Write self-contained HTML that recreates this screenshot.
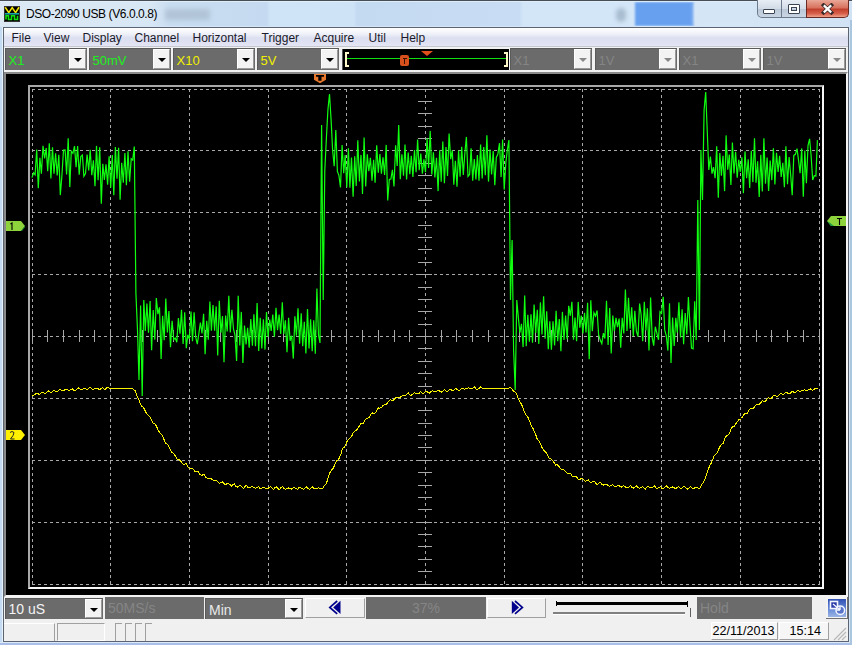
<!DOCTYPE html>
<html><head><meta charset="utf-8">
<style>
*{margin:0;padding:0;box-sizing:border-box}
html,body{width:852px;height:645px;overflow:hidden}
body{position:relative;background:#c5dbf1;font-family:"Liberation Sans",sans-serif;}
.a{position:absolute}
#title{position:absolute;left:0;top:0;width:852px;height:27px;
 background:linear-gradient(90deg,#dce9f4 0%,#d8e7f4 17.6%,#c9ddf1 20%,#c5daf0 31.3%,#d0e4f7 31.7%,#cee3f6 41.5%,#c4daf1 41.9%,#c8ddf3 61%,#d3e6f8 61.4%,#d3e6f8 72%,#d6e7f7 82%,#d0e2f3 100%);}
#ttext{position:absolute;left:26px;top:7px;font-size:12px;color:#000;white-space:nowrap;letter-spacing:-0.42px}
.wb{position:absolute;top:0;height:18px;border:1px solid #6b7a8c;border-top:none}
#menubar{position:absolute;left:4px;top:28px;width:844px;height:19px;
 background:linear-gradient(#ffffff 0%,#eef0f8 35%,#dcdff0 55%,#dfe1f2 80%,#e4e6f5 100%);border-bottom:1px solid #c4c6d0}
#menubar span{position:absolute;top:3px;font-size:12px;color:#1a1a2a}
#tb{position:absolute;left:4px;top:47px;width:844px;height:25px;background:#f2f2f2}
.cb{position:absolute;background:#6b6b6b;border-top:1px solid #5a5a5a;border-left:1px solid #5a5a5a}
.cb span{position:absolute;left:2.5px;top:3.5px;font-size:13px;white-space:nowrap}
.dd{position:absolute;right:1px;top:0px;width:17px;bottom:1px;background:#f3f3f3;
 border-top:1px solid #fff;border-left:1px solid #fff;border-right:1px solid #9a9a9a;border-bottom:1px solid #9a9a9a}
.dd i{position:absolute;left:3.5px;top:8px;width:0;height:0;border-left:4px solid transparent;border-right:4px solid transparent;border-top:4px solid #000}
#scope{position:absolute;left:4px;top:72px;width:844px;height:525px;background:#000;
 border-top:2px solid #8a8a8a;border-left:2px solid #8a8a8a;border-right:2px solid #f4f4f4;border-bottom:2px solid #f4f4f4}
#grat{position:absolute;left:28px;top:85px;width:796px;height:504px;
 border-top:2px solid #a8a8a8;border-left:2px solid #a8a8a8;border-right:2px solid #f8f8f8;border-bottom:2px solid #f8f8f8}
#bt{position:absolute;left:4px;top:597px;width:844px;height:23px;background:#f0f0f0}
.box{position:absolute;background:#6b6b6b}
.box span{position:absolute;font-size:13px;white-space:nowrap;color:#858585}
.btn{position:absolute;background:#f0f0f0;border-top:1px solid #fff;border-left:1px solid #fff;border-right:1px solid #a0a0a0;border-bottom:1px solid #a0a0a0}
#status{position:absolute;left:4px;top:620px;width:844px;height:21px;background:#f0f0f0}
.pn{position:absolute;top:623px;height:18px;border-top:1px solid #a0a0a0;border-left:1px solid #a0a0a0;border-right:1px solid #fff;border-bottom:1px solid #fff}
.pn span{position:absolute;top:2px;font-size:12px;color:#000;white-space:nowrap}
</style></head><body>
<div id="title"></div>
<!-- glass blobs -->
<div class="a" style="left:635px;top:2px;width:59px;height:24px;background:#68a0f0;filter:blur(1px)"></div><div class="a" style="left:694px;top:2px;width:60px;height:24px;background:#d4e5f6;filter:blur(2px)"></div>
<div class="a" style="left:616px;top:8px;width:10px;height:14px;border-radius:5px;background:#a8bccf;filter:blur(2px)"></div>
<div class="a" style="left:165px;top:9px;width:45px;height:11px;background:#a9bccf;filter:blur(2.5px);opacity:.75"></div>
<div class="a" style="left:0;top:0;width:852px;height:1px;background:#484e56"></div><div class="a" style="left:0;top:1px;width:852px;height:1px;background:#e4f0fa;opacity:.8"></div><div class="a" style="left:0;top:26px;width:852px;height:1px;background:#d4e6f8"></div>
<!-- icon -->
<div class="a" style="left:4px;top:6px;width:16px;height:16px;background:#000;border:1px solid #333"></div>
<svg class="a" style="left:4px;top:6px" width="16" height="16" viewBox="0 0 16 16">
<polyline points="1.2,1.2 4.8,6.6 8.2,1.6 11.6,6.6 15,1.2" fill="none" stroke="#f2e400" stroke-width="1.6"/>
<rect x="1" y="7" width="14" height="1.6" fill="#18a8a8"/>
<polyline points="2,13.5 2,9.8 4.5,9.8 4.5,13.5 7.5,13.5 7.5,9.8 10.5,9.8 10.5,13.5 13.5,13.5 13.5,9.8" fill="none" stroke="#10e010" stroke-width="1.6"/>
</svg>
<div id="ttext">DSO-2090 USB (V6.0.0.8)</div>
<!-- window buttons -->
<div class="wb" style="left:757px;width:25px;border-radius:0 0 0 5px;background:linear-gradient(#e8eef5,#d2dbe6 50%,#b9c6d6 51%,#c9d5e2)"></div>
<div class="wb" style="left:781px;width:26px;background:linear-gradient(#e8eef5,#d2dbe6 50%,#b9c6d6 51%,#c9d5e2)"></div>
<div class="wb" style="left:806px;width:43px;border-radius:0 0 5px 0;border-color:#6a2a24;background:linear-gradient(#e9a797,#d8735f 45%,#c0402e 55%,#d8604a 80%,#eea08a)"></div>
<div class="a" style="left:763px;top:9px;width:12px;height:5px;background:#fff;border:1px solid #3a4452;border-radius:1px"></div>
<div class="a" style="left:788px;top:4px;width:12px;height:10px;background:transparent;border:1px solid #3a4452;border-radius:1px"></div>
<div class="a" style="left:789px;top:5px;width:10px;height:8px;border:2px solid #fff;"></div>
<div class="a" style="left:791px;top:7px;width:6px;height:4px;border:1px solid #3a4452;"></div>
<svg class="a" style="left:820px;top:3px" width="15" height="12" viewBox="0 0 15 12"><path d="M3.6,2.2 L11.4,9.6 M11.4,2.2 L3.6,9.6" stroke="#3a2a2a" stroke-width="3.8" stroke-linecap="square"/><path d="M3.8,2.4 L11.2,9.4 M11.2,2.4 L3.8,9.4" stroke="#fff" stroke-width="2.2"/></svg>
<!-- client frame -->
<div class="a" style="left:0;top:642px;width:852px;height:1px;background:#dae8f8"></div>
<div class="a" style="left:0;top:643px;width:852px;height:2px;background:#a9bee8"></div>
<div class="a" style="left:2px;top:27px;width:1px;height:615px;background:#e6f2fc"></div>
<div class="a" style="left:850px;top:20px;width:2px;height:625px;background:#aac6de"></div>
<div class="a" style="left:849px;top:27px;width:1px;height:615px;background:#d6e8f6"></div>
<div class="a" style="left:3px;top:27px;width:846px;height:615px;border:1px solid #5b6470;background:#f0f0f0"></div>
<div id="menubar">
<span style="left:7.5px">File</span><span style="left:39.5px">View</span><span style="left:78.5px">Display</span>
<span style="left:130.5px">Channel</span><span style="left:188.5px">Horizontal</span><span style="left:257.5px">Trigger</span>
<span style="left:309.5px">Acquire</span><span style="left:364.5px">Util</span><span style="left:396.5px">Help</span>
</div>
<div id="tb"></div>
<div class="cb" style="left:5px;top:48px;width:82px;height:22px"><span style="color:#1cf01c">X1</span><div class="dd"><i style="border-top-color:#000"></i></div></div><div class="cb" style="left:89px;top:48px;width:82px;height:22px"><span style="color:#1cf01c">50mV</span><div class="dd"><i style="border-top-color:#000"></i></div></div><div class="cb" style="left:173px;top:48px;width:82px;height:22px"><span style="color:#f0f000">X10</span><div class="dd"><i style="border-top-color:#000"></i></div></div><div class="cb" style="left:257px;top:48px;width:82px;height:22px"><span style="color:#f0f000">5V</span><div class="dd"><i style="border-top-color:#000"></i></div></div><div class="cb" style="left:510px;top:48px;width:82px;height:22px"><span style="color:#858585">X1</span><div class="dd"><i style="border-top-color:#888"></i></div></div><div class="cb" style="left:595px;top:48px;width:82px;height:22px"><span style="color:#858585">1V</span><div class="dd"><i style="border-top-color:#888"></i></div></div><div class="cb" style="left:679px;top:48px;width:82px;height:22px"><span style="color:#858585">X1</span><div class="dd"><i style="border-top-color:#888"></i></div></div><div class="cb" style="left:763px;top:48px;width:83px;height:22px"><span style="color:#858585">1V</span><div class="dd"><i style="border-top-color:#888"></i></div></div>
<!-- trigger bar -->
<div class="a" style="left:342px;top:49px;width:167px;height:21px;background:#000;border-left:1px solid #555"></div>
<div class="a" style="left:345px;top:52px;width:4px;height:15px;border:2px solid #fff8c8;border-right:none"></div>
<div class="a" style="left:504px;top:52px;width:4px;height:15px;border:2px solid #fff8c8;border-left:none"></div>
<div class="a" style="left:347px;top:58px;width:159px;height:1px;background:#10e010"></div>
<div class="a" style="left:400px;top:55px;width:9px;height:11px;background:#d8501c;border-radius:2px"></div>
<div class="a" style="left:403px;top:58px;width:4px;height:1px;background:#3a1000"></div>
<div class="a" style="left:404px;top:58px;width:1px;height:6px;background:#3a1000"></div>
<svg class="a" style="left:420px;top:50px" width="14" height="7"><path d="M1,1 L13,1 L7,6 Z" fill="#e0501c"/></svg>
<!-- scope -->
<div id="scope"></div>
<div id="grat"></div>
<svg class="a" style="left:0;top:0" width="852" height="645" viewBox="0 0 852 645">
<g stroke="#a8a8a8" stroke-width="1" stroke-dasharray="3 3" shape-rendering="crispEdges">
<line x1="32.5" y1="89" x2="32.5" y2="585" />
<line x1="110.5" y1="89" x2="110.5" y2="585" />
<line x1="189.5" y1="89" x2="189.5" y2="585" />
<line x1="268.5" y1="89" x2="268.5" y2="585" />
<line x1="346.5" y1="89" x2="346.5" y2="585" />
<line x1="425.5" y1="89" x2="425.5" y2="585" />
<line x1="504.5" y1="89" x2="504.5" y2="585" />
<line x1="582.5" y1="89" x2="582.5" y2="585" />
<line x1="661.5" y1="89" x2="661.5" y2="585" />
<line x1="740.5" y1="89" x2="740.5" y2="585" />
<line x1="819.5" y1="89" x2="819.5" y2="585" />
<line x1="32" y1="89.5" x2="820" y2="89.5" />
<line x1="32" y1="150.5" x2="820" y2="150.5" />
<line x1="32" y1="212.5" x2="820" y2="212.5" />
<line x1="32" y1="274.5" x2="820" y2="274.5" />
<line x1="32" y1="336.5" x2="820" y2="336.5" />
<line x1="32" y1="398.5" x2="820" y2="398.5" />
<line x1="32" y1="460.5" x2="820" y2="460.5" />
<line x1="32" y1="522.5" x2="820" y2="522.5" />
<line x1="32" y1="584.5" x2="820" y2="584.5" />
</g>
<g stroke="#a8a8a8" stroke-width="1" shape-rendering="crispEdges">
<line x1="418" y1="89.5" x2="432" y2="89.5" />
<line x1="418" y1="101.5" x2="432" y2="101.5" />
<line x1="418" y1="113.5" x2="432" y2="113.5" />
<line x1="418" y1="126.5" x2="432" y2="126.5" />
<line x1="418" y1="138.5" x2="432" y2="138.5" />
<line x1="418" y1="150.5" x2="432" y2="150.5" />
<line x1="418" y1="163.5" x2="432" y2="163.5" />
<line x1="418" y1="175.5" x2="432" y2="175.5" />
<line x1="418" y1="188.5" x2="432" y2="188.5" />
<line x1="418" y1="200.5" x2="432" y2="200.5" />
<line x1="418" y1="212.5" x2="432" y2="212.5" />
<line x1="418" y1="225.5" x2="432" y2="225.5" />
<line x1="418" y1="237.5" x2="432" y2="237.5" />
<line x1="418" y1="249.5" x2="432" y2="249.5" />
<line x1="418" y1="262.5" x2="432" y2="262.5" />
<line x1="418" y1="274.5" x2="432" y2="274.5" />
<line x1="418" y1="287.5" x2="432" y2="287.5" />
<line x1="418" y1="299.5" x2="432" y2="299.5" />
<line x1="418" y1="311.5" x2="432" y2="311.5" />
<line x1="418" y1="324.5" x2="432" y2="324.5" />
<line x1="418" y1="336.5" x2="432" y2="336.5" />
<line x1="418" y1="348.5" x2="432" y2="348.5" />
<line x1="418" y1="361.5" x2="432" y2="361.5" />
<line x1="418" y1="373.5" x2="432" y2="373.5" />
<line x1="418" y1="386.5" x2="432" y2="386.5" />
<line x1="418" y1="398.5" x2="432" y2="398.5" />
<line x1="418" y1="410.5" x2="432" y2="410.5" />
<line x1="418" y1="423.5" x2="432" y2="423.5" />
<line x1="418" y1="435.5" x2="432" y2="435.5" />
<line x1="418" y1="447.5" x2="432" y2="447.5" />
<line x1="418" y1="460.5" x2="432" y2="460.5" />
<line x1="418" y1="472.5" x2="432" y2="472.5" />
<line x1="418" y1="485.5" x2="432" y2="485.5" />
<line x1="418" y1="497.5" x2="432" y2="497.5" />
<line x1="418" y1="509.5" x2="432" y2="509.5" />
<line x1="418" y1="522.5" x2="432" y2="522.5" />
<line x1="418" y1="534.5" x2="432" y2="534.5" />
<line x1="418" y1="546.5" x2="432" y2="546.5" />
<line x1="418" y1="559.5" x2="432" y2="559.5" />
<line x1="418" y1="571.5" x2="432" y2="571.5" />
<line x1="418" y1="584.5" x2="432" y2="584.5" />
<line x1="32.5" y1="330" x2="32.5" y2="342" />
<line x1="47.5" y1="330" x2="47.5" y2="342" />
<line x1="63.5" y1="330" x2="63.5" y2="342" />
<line x1="79.5" y1="330" x2="79.5" y2="342" />
<line x1="94.5" y1="330" x2="94.5" y2="342" />
<line x1="110.5" y1="330" x2="110.5" y2="342" />
<line x1="126.5" y1="330" x2="126.5" y2="342" />
<line x1="142.5" y1="330" x2="142.5" y2="342" />
<line x1="157.5" y1="330" x2="157.5" y2="342" />
<line x1="173.5" y1="330" x2="173.5" y2="342" />
<line x1="189.5" y1="330" x2="189.5" y2="342" />
<line x1="205.5" y1="330" x2="205.5" y2="342" />
<line x1="220.5" y1="330" x2="220.5" y2="342" />
<line x1="236.5" y1="330" x2="236.5" y2="342" />
<line x1="252.5" y1="330" x2="252.5" y2="342" />
<line x1="268.5" y1="330" x2="268.5" y2="342" />
<line x1="283.5" y1="330" x2="283.5" y2="342" />
<line x1="299.5" y1="330" x2="299.5" y2="342" />
<line x1="315.5" y1="330" x2="315.5" y2="342" />
<line x1="331.5" y1="330" x2="331.5" y2="342" />
<line x1="346.5" y1="330" x2="346.5" y2="342" />
<line x1="362.5" y1="330" x2="362.5" y2="342" />
<line x1="378.5" y1="330" x2="378.5" y2="342" />
<line x1="394.5" y1="330" x2="394.5" y2="342" />
<line x1="409.5" y1="330" x2="409.5" y2="342" />
<line x1="425.5" y1="330" x2="425.5" y2="342" />
<line x1="441.5" y1="330" x2="441.5" y2="342" />
<line x1="456.5" y1="330" x2="456.5" y2="342" />
<line x1="472.5" y1="330" x2="472.5" y2="342" />
<line x1="488.5" y1="330" x2="488.5" y2="342" />
<line x1="504.5" y1="330" x2="504.5" y2="342" />
<line x1="519.5" y1="330" x2="519.5" y2="342" />
<line x1="535.5" y1="330" x2="535.5" y2="342" />
<line x1="551.5" y1="330" x2="551.5" y2="342" />
<line x1="567.5" y1="330" x2="567.5" y2="342" />
<line x1="582.5" y1="330" x2="582.5" y2="342" />
<line x1="598.5" y1="330" x2="598.5" y2="342" />
<line x1="614.5" y1="330" x2="614.5" y2="342" />
<line x1="630.5" y1="330" x2="630.5" y2="342" />
<line x1="645.5" y1="330" x2="645.5" y2="342" />
<line x1="661.5" y1="330" x2="661.5" y2="342" />
<line x1="677.5" y1="330" x2="677.5" y2="342" />
<line x1="693.5" y1="330" x2="693.5" y2="342" />
<line x1="708.5" y1="330" x2="708.5" y2="342" />
<line x1="724.5" y1="330" x2="724.5" y2="342" />
<line x1="740.5" y1="330" x2="740.5" y2="342" />
<line x1="756.5" y1="330" x2="756.5" y2="342" />
<line x1="771.5" y1="330" x2="771.5" y2="342" />
<line x1="787.5" y1="330" x2="787.5" y2="342" />
<line x1="803.5" y1="330" x2="803.5" y2="342" />
<line x1="819.5" y1="330" x2="819.5" y2="342" />
</g>
<polyline fill="none" stroke="#f8f400" stroke-width="1" shape-rendering="crispEdges" points="32.0,395.8 33.5,395.8 35.0,394.3 36.5,393.4 38.0,393.8 39.5,394.5 41.0,392.9 42.5,392.1 44.0,392.9 45.5,393.4 47.0,392.1 48.5,391.0 50.0,392.0 51.5,392.8 53.0,391.1 54.5,390.4 56.0,391.6 57.5,391.3 59.0,389.9 60.5,389.8 62.0,390.4 63.5,390.9 65.0,389.6 66.5,389.1 68.0,390.1 69.5,390.9 71.0,389.1 72.5,388.9 74.0,390.3 75.5,390.5 77.0,389.2 78.5,388.0 80.0,389.2 81.5,389.8 83.0,388.8 84.5,388.7 86.0,389.0 87.5,389.9 89.0,388.1 90.5,387.7 92.0,389.1 93.5,389.8 95.0,388.3 96.5,388.2 98.0,388.7 99.5,389.8 101.0,388.5 102.5,387.7 104.0,389.1 105.5,389.2 107.0,387.7 108.5,387.5 110.0,388.7 111.5,388.5 113.0,388.5 114.5,388.5 116.0,388.5 117.5,388.5 119.0,388.5 120.5,388.5 122.0,388.5 123.5,388.5 125.0,388.5 126.5,388.5 128.0,388.5 129.5,388.5 131.0,388.5 132.5,388.5 134.0,389.9 135.5,391.1 137.0,396.1 138.5,398.5 140.0,402.8 141.5,406.1 143.0,406.8 144.5,409.3 146.0,412.6 147.5,414.5 149.0,416.0 150.5,417.6 152.0,420.9 153.5,423.8 155.0,424.0 156.5,426.2 158.0,430.0 159.5,432.4 161.0,434.3 162.5,435.5 164.0,439.4 165.5,443.0 167.0,443.7 168.5,446.0 170.0,449.1 171.5,452.3 173.0,452.7 174.5,454.7 176.0,457.1 177.5,459.8 179.0,459.7 180.5,460.6 182.0,463.1 183.5,464.7 185.0,463.9 186.5,464.0 188.0,467.2 189.5,468.2 191.0,468.0 192.5,468.8 194.0,470.2 195.5,471.9 197.0,471.6 198.5,471.8 200.0,474.5 201.5,475.5 203.0,474.8 204.5,475.0 206.0,477.7 207.5,478.3 209.0,478.1 210.5,478.2 212.0,479.3 213.5,480.5 215.0,480.1 216.5,480.3 218.0,482.2 219.5,483.1 221.0,482.4 222.5,481.9 224.0,483.6 225.5,484.8 227.0,483.4 228.5,483.8 230.0,484.5 231.5,486.0 233.0,484.7 234.5,483.9 236.0,486.5 237.5,487.0 239.0,485.9 240.5,485.3 242.0,487.0 243.5,488.4 245.0,486.4 246.5,485.2 248.0,487.5 249.5,487.9 251.0,487.1 252.5,486.6 254.0,487.7 255.5,488.2 257.0,487.6 258.5,486.4 260.0,488.9 261.5,488.5 263.0,487.1 264.5,487.3 266.0,488.6 267.5,488.5 269.0,487.8 270.5,486.5 272.0,488.2 273.5,489.3 275.0,487.6 276.5,486.8 278.0,488.8 279.5,489.4 281.0,487.7 282.5,486.7 284.0,488.5 285.5,489.2 287.0,488.1 288.5,488.0 290.0,488.6 291.5,489.0 293.0,487.8 294.5,487.8 296.0,488.4 297.5,489.6 299.0,486.9 300.5,487.7 302.0,488.5 303.5,489.3 305.0,488.1 306.5,487.0 308.0,488.7 309.5,489.3 311.0,488.1 312.5,487.1 314.0,488.4 315.5,488.5 317.0,488.8 318.5,487.4 320.0,488.7 321.5,488.6 323.0,488.1 324.5,485.3 326.0,484.0 327.5,480.2 329.0,474.7 330.5,471.5 332.0,469.5 333.5,467.8 335.0,464.0 336.5,460.9 338.0,460.0 339.5,457.6 341.0,453.7 342.5,448.4 344.0,447.5 345.5,445.0 347.0,441.5 348.5,439.1 350.0,438.3 351.5,436.6 353.0,433.2 354.5,431.3 356.0,430.8 357.5,428.8 359.0,426.4 360.5,423.9 362.0,423.7 363.5,423.1 365.0,420.2 366.5,418.4 368.0,417.9 369.5,417.2 371.0,414.3 372.5,413.0 374.0,413.2 375.5,412.8 377.0,410.2 378.5,407.9 380.0,408.2 381.5,407.4 383.0,405.4 384.5,404.5 386.0,404.4 387.5,402.8 389.0,400.9 390.5,399.5 392.0,400.6 393.5,400.1 395.0,398.2 396.5,397.7 398.0,397.6 399.5,397.6 401.0,396.8 402.5,395.4 404.0,396.0 405.5,395.6 407.0,394.2 408.5,393.1 410.0,395.0 411.5,395.1 413.0,393.9 414.5,392.9 416.0,393.7 417.5,393.9 419.0,393.4 420.5,391.4 422.0,393.2 423.5,393.4 425.0,392.2 426.5,391.2 428.0,392.7 429.5,393.1 431.0,391.3 432.5,390.6 434.0,391.9 435.5,391.9 437.0,390.8 438.5,390.2 440.0,391.5 441.5,392.2 443.0,390.8 444.5,389.6 446.0,391.1 447.5,391.3 449.0,390.0 450.5,389.2 452.0,390.4 453.5,390.4 455.0,388.9 456.5,388.9 458.0,390.2 459.5,390.3 461.0,388.8 462.5,388.1 464.0,389.1 465.5,388.9 467.0,388.4 468.5,387.7 470.0,388.6 471.5,388.8 473.0,388.2 474.5,386.6 476.0,389.1 477.5,389.1 479.0,388.4 480.5,386.9 482.0,388.0 483.5,388.0 485.0,388.0 486.5,388.0 488.0,388.0 489.5,388.0 491.0,388.0 492.5,388.0 494.0,388.0 495.5,388.0 497.0,388.0 498.5,388.0 500.0,388.0 501.5,388.0 503.0,388.0 504.5,388.0 506.0,388.0 507.5,388.0 509.0,388.0 510.5,387.2 512.0,389.0 513.5,391.1 515.0,391.7 516.5,393.6 518.0,398.4 519.5,401.3 521.0,403.4 522.5,406.6 524.0,410.7 525.5,414.2 527.0,416.0 528.5,418.2 530.0,422.3 531.5,426.4 533.0,428.4 534.5,431.9 536.0,435.5 537.5,439.8 539.0,440.9 540.5,443.5 542.0,447.4 543.5,450.3 545.0,451.3 546.5,453.3 548.0,455.7 549.5,458.7 551.0,459.1 552.5,460.3 554.0,462.6 555.5,465.1 557.0,464.7 558.5,465.6 560.0,467.9 561.5,469.7 563.0,469.7 564.5,470.3 566.0,472.1 567.5,473.9 569.0,473.7 570.5,473.3 572.0,476.3 573.5,476.5 575.0,476.6 576.5,476.9 578.0,479.1 579.5,479.7 581.0,478.6 582.5,478.5 584.0,480.0 585.5,481.5 587.0,480.3 588.5,480.0 590.0,482.1 591.5,482.4 593.0,481.6 594.5,481.5 596.0,483.8 597.5,484.5 599.0,482.9 600.5,482.3 602.0,484.5 603.5,485.1 605.0,484.2 606.5,484.1 608.0,485.3 609.5,486.4 611.0,485.3 612.5,484.8 614.0,486.1 615.5,486.7 617.0,486.0 618.5,485.1 620.0,486.8 621.5,487.2 623.0,485.8 624.5,486.1 626.0,487.3 627.5,487.8 629.0,486.8 630.5,485.6 632.0,487.5 633.5,488.0 635.0,487.0 636.5,485.9 638.0,487.9 639.5,488.1 641.0,487.3 642.5,486.8 644.0,487.9 645.5,488.9 647.0,486.9 648.5,486.4 650.0,487.7 651.5,488.0 653.0,487.0 654.5,485.9 656.0,487.9 657.5,488.5 659.0,487.4 660.5,486.6 662.0,488.5 663.5,488.2 665.0,487.1 666.5,486.1 668.0,487.8 669.5,488.2 671.0,487.7 672.5,487.0 674.0,487.7 675.5,488.8 677.0,487.4 678.5,486.8 680.0,488.2 681.5,488.5 683.0,487.1 684.5,486.3 686.0,488.2 687.5,489.1 689.0,487.8 690.5,486.8 692.0,488.0 693.5,488.6 695.0,487.7 696.5,487.1 698.0,488.0 699.5,488.7 701.0,486.0 702.5,483.5 704.0,481.4 705.5,477.8 707.0,472.9 708.5,468.6 710.0,465.4 711.5,462.6 713.0,458.8 714.5,455.2 716.0,453.9 717.5,452.7 719.0,448.5 720.5,445.7 722.0,444.0 723.5,442.9 725.0,438.1 726.5,435.7 728.0,435.0 729.5,433.4 731.0,429.1 732.5,426.7 734.0,426.5 735.5,424.4 737.0,422.2 738.5,420.0 740.0,419.4 741.5,418.5 743.0,415.8 744.5,413.7 746.0,413.7 747.5,413.2 749.0,410.0 750.5,408.7 752.0,408.7 753.5,408.6 755.0,405.7 756.5,404.6 758.0,404.8 759.5,404.2 761.0,402.5 762.5,400.6 764.0,401.6 765.5,401.0 767.0,399.1 768.5,397.5 770.0,398.5 771.5,398.2 773.0,395.9 774.5,395.3 776.0,396.1 777.5,396.2 779.0,395.0 780.5,393.5 782.0,394.1 783.5,394.2 785.0,393.0 786.5,392.2 788.0,393.4 789.5,393.7 791.0,392.5 792.5,391.3 794.0,392.4 795.5,392.2 797.0,391.1 798.5,390.7 800.0,391.8 801.5,390.9 803.0,390.3 804.5,389.9 806.0,390.8 807.5,390.3 809.0,389.2 810.5,389.0 812.0,390.1 813.5,390.0 815.0,388.5 816.5,388.6 818.0,389.1"/>
<polyline fill="none" stroke="#10ff10" stroke-width="1.2" points="32.0,177.6 33.6,172.8 35.1,174.8 36.7,149.6 38.3,188.2 39.9,157.8 41.4,173.6 43.0,145.9 44.6,158.5 46.2,148.0 47.7,171.2 49.3,143.3 50.9,178.5 52.5,147.3 54.0,173.7 55.6,153.3 57.2,175.5 58.8,154.8 60.3,195.1 61.9,175.8 63.5,150.1 65.1,150.0 66.6,174.4 68.2,138.2 69.8,187.1 71.3,151.2 72.9,153.3 74.5,146.1 76.1,167.2 77.6,146.0 79.2,174.8 80.8,156.6 82.4,155.1 83.9,176.3 85.5,173.6 87.1,154.5 88.7,170.5 90.2,149.7 91.8,175.3 93.4,160.3 95.0,186.2 96.5,145.9 98.1,180.3 99.7,147.2 101.3,203.8 102.8,163.8 104.4,179.9 106.0,164.4 107.6,184.8 109.1,156.4 110.7,187.8 112.3,155.0 113.8,195.2 115.4,147.0 117.0,178.8 118.6,147.8 120.1,199.8 121.7,162.9 123.3,182.7 124.9,153.1 126.4,185.1 128.0,151.4 129.6,181.7 131.2,158.8 132.7,160.0 134.3,146.6 135.9,293.0 137.5,330.0 139.0,380.0 140.6,305.6 142.2,396.0 143.8,300.0 145.3,330.9 146.9,303.6 148.5,332.6 150.1,301.0 151.6,350.3 153.2,310.1 154.8,339.8 156.3,298.1 157.9,314.1 159.5,307.3 161.1,359.1 162.6,315.8 164.2,340.2 165.8,298.6 167.4,332.5 168.9,311.1 170.5,347.1 172.1,320.8 173.7,339.5 175.2,338.1 176.8,342.3 178.4,318.1 180.0,333.7 181.5,309.7 183.1,344.0 184.7,312.4 186.3,348.3 187.8,334.7 189.4,339.0 191.0,311.5 192.5,341.1 194.1,312.4 195.7,337.1 197.3,344.1 198.8,334.0 200.4,322.6 202.0,333.4 203.6,313.8 205.1,354.3 206.7,320.7 208.3,339.7 209.9,301.5 211.4,330.7 213.0,305.1 214.6,330.8 216.2,306.4 217.7,355.6 219.3,300.7 220.9,332.8 222.5,316.1 224.0,362.3 225.6,315.6 227.2,331.4 228.8,295.8 230.3,332.5 231.9,309.9 233.5,329.2 235.0,335.1 236.6,361.0 238.2,295.7 239.8,345.4 241.3,311.9 242.9,363.0 244.5,325.6 246.1,344.5 247.6,327.8 249.2,347.6 250.8,319.1 252.4,345.6 253.9,314.3 255.5,346.3 257.1,302.9 258.7,350.9 260.2,317.8 261.8,348.4 263.4,319.2 265.0,349.6 266.5,312.1 268.1,336.8 269.7,319.6 271.2,330.9 272.8,314.5 274.4,336.7 276.0,307.7 277.5,330.1 279.1,314.6 280.7,333.9 282.3,302.4 283.8,334.0 285.4,320.3 287.0,352.2 288.6,317.8 290.1,340.7 291.7,335.8 293.3,358.6 294.9,316.2 296.4,335.7 298.0,308.2 299.6,343.7 301.2,313.4 302.7,346.2 304.3,321.7 305.9,353.5 307.5,308.9 309.0,348.6 310.6,319.4 312.2,351.2 313.7,320.4 315.3,353.7 316.9,288.5 318.5,335.3 320.0,343.0 321.6,125.0 323.2,300.0 324.8,170.0 326.3,140.0 327.9,110.0 329.5,94.0 331.1,120.0 332.6,150.0 334.2,166.2 335.8,130.0 337.4,171.5 338.9,175.4 340.5,187.5 342.1,145.1 343.7,173.3 345.2,155.0 346.8,187.4 348.4,148.3 349.9,187.7 351.5,157.5 353.1,196.8 354.7,156.3 356.2,185.9 357.8,140.2 359.4,181.5 361.0,154.9 362.5,194.1 364.1,137.4 365.7,186.5 367.3,154.3 368.8,171.2 370.4,157.9 372.0,180.8 373.6,159.8 375.1,182.6 376.7,145.2 378.3,172.8 379.9,154.1 381.4,173.8 383.0,157.2 384.6,175.0 386.2,144.9 387.7,200.5 389.3,179.5 390.9,179.1 392.4,169.8 394.0,186.4 395.6,145.2 397.2,166.0 398.7,125.0 400.3,179.3 401.9,154.2 403.5,175.8 405.0,144.5 406.6,179.5 408.2,152.5 409.8,174.2 411.3,155.7 412.9,176.9 414.5,150.1 416.1,172.2 417.6,139.5 419.2,170.1 420.8,153.6 422.4,173.7 423.9,159.4 425.5,172.1 427.1,138.3 428.6,167.9 430.2,130.9 431.8,174.6 433.4,152.2 434.9,177.5 436.5,157.9 438.1,191.1 439.7,150.2 441.2,181.8 442.8,141.6 444.4,183.2 446.0,147.1 447.5,176.0 449.1,133.5 450.7,159.1 452.3,150.3 453.8,184.7 455.4,160.8 457.0,186.6 458.6,150.6 460.1,176.8 461.7,146.9 463.3,174.9 464.9,152.5 466.4,136.9 468.0,176.4 469.6,174.4 471.1,148.3 472.7,180.6 474.3,159.0 475.9,179.5 477.4,155.1 479.0,180.8 480.6,144.6 482.2,178.5 483.7,147.1 485.3,175.3 486.9,135.2 488.5,181.6 490.0,149.5 491.6,174.4 493.2,151.0 494.8,185.1 496.3,157.4 497.9,153.9 499.5,143.2 501.1,177.1 502.6,139.6 504.2,189.6 505.8,163.2 507.3,150.0 508.9,140.0 510.5,300.0 512.1,240.0 513.6,350.0 515.2,390.0 516.8,300.0 518.4,318.1 519.9,332.7 521.5,323.8 523.1,347.1 524.7,295.5 526.2,346.2 527.8,314.8 529.4,341.6 531.0,314.2 532.5,342.6 534.1,304.5 535.7,332.9 537.3,309.9 538.8,343.9 540.4,302.4 542.0,334.4 543.6,296.2 545.1,338.7 546.7,311.3 548.3,349.1 549.8,321.3 551.4,349.6 553.0,321.2 554.6,345.4 556.1,310.8 557.7,341.1 559.3,319.1 560.9,351.3 562.4,311.9 564.0,340.0 565.6,315.5 567.2,339.2 568.7,305.8 570.3,315.8 571.9,301.7 573.5,339.8 575.0,317.5 576.6,341.3 578.2,301.9 579.8,327.7 581.3,315.5 582.9,333.5 584.5,312.7 586.0,332.5 587.6,302.7 589.2,359.2 590.8,300.3 592.3,331.2 593.9,312.7 595.5,316.0 597.1,310.5 598.6,334.7 600.2,340.1 601.8,343.6 603.4,333.2 604.9,338.5 606.5,300.8 608.1,345.0 609.7,308.1 611.2,353.5 612.8,315.5 614.4,331.3 616.0,317.8 617.5,327.1 619.1,318.5 620.7,347.6 622.2,317.7 623.8,333.5 625.4,289.4 627.0,331.0 628.5,297.8 630.1,328.8 631.7,307.4 633.3,336.1 634.8,310.9 636.4,331.2 638.0,336.7 639.6,303.5 641.1,314.5 642.7,341.2 644.3,301.7 645.9,330.4 647.4,308.2 649.0,350.5 650.6,297.4 652.2,337.6 653.7,345.7 655.3,326.7 656.9,333.3 658.5,339.8 660.0,311.7 661.6,313.4 663.2,296.7 664.7,329.9 666.3,335.9 667.9,350.6 669.5,303.2 671.0,363.0 672.6,317.5 674.2,346.0 675.8,317.7 677.3,332.8 678.9,302.3 680.5,337.4 682.1,309.3 683.6,344.2 685.2,313.1 686.8,334.5 688.4,297.0 689.9,323.7 691.5,348.0 693.1,348.8 694.7,301.3 696.2,340.0 697.8,200.0 699.4,330.0 700.9,150.0 702.5,200.0 704.1,110.0 705.7,92.0 707.2,130.0 708.8,170.0 710.4,156.5 712.0,173.6 713.5,167.1 715.1,178.2 716.7,146.2 718.3,197.7 719.8,153.1 721.4,175.8 723.0,155.8 724.6,191.1 726.1,135.4 727.7,169.7 729.3,154.6 730.9,185.0 732.4,142.6 734.0,173.5 735.6,151.7 737.2,177.8 738.7,159.7 740.3,171.8 741.9,157.2 743.4,193.2 745.0,151.4 746.6,178.2 748.2,159.4 749.7,187.9 751.3,150.7 752.9,182.1 754.5,138.3 756.0,182.8 757.6,161.3 759.2,196.9 760.8,154.8 762.3,191.6 763.9,138.3 765.5,183.7 767.1,157.5 768.6,191.0 770.2,160.5 771.8,180.3 773.4,148.3 774.9,184.4 776.5,152.7 778.1,172.0 779.6,155.9 781.2,176.9 782.8,162.8 784.4,187.3 785.9,146.2 787.5,184.3 789.1,157.1 790.7,175.4 792.2,195.2 793.8,155.4 795.4,154.3 797.0,148.6 798.5,159.9 800.1,173.2 801.7,148.4 803.3,196.8 804.8,150.5 806.4,183.2 808.0,145.6 809.6,138.8 811.1,155.7 812.7,180.0 814.3,175.6 815.9,176.0 817.4,140.1"/>
<!-- markers -->
<path d="M6,221 L21,221 L25,226 L21,231 L6,231 Z" fill="#8ed23c"/>
<path d="M21,231 L25,226 L25,227 L22,231 Z" fill="#20a040"/>
<path d="M10.5,224 L12,223 L12,230" fill="none" stroke="#000" stroke-width="1.1"/>
<path d="M6,430 L21,430 L25,435 L21,440 L6,440 Z" fill="#fff000"/>
<path d="M10,432.5 Q12,430.5 14,432.5 Q14,435 10.5,439 L14.5,439" fill="none" stroke="#222" stroke-width="1"/>
<path d="M846,216 L831,216 L827,221 L831,226 L846,226 Z" fill="#8ed23c"/>
<path d="M827,221 L831,226 L834,226 L829,222 Z" fill="#20a040"/>
<path d="M837,218.5 L842,218.5 M839.5,218.5 L839.5,225" fill="none" stroke="#000" stroke-width="1.1"/>
<path d="M314,74 L326,74 L326,79.8 L320,83.2 L314,79.8 Z" fill="#e8782c"/>
<path d="M316,75 L324,75 L324,76.8 L321.5,76.8 L321.5,80.7 L318.3,80.7 L318.3,76.8 L316,76.8 Z" fill="#000"/>
</svg>
<!-- bottom toolbar -->
<div id="bt"></div>
<div class="cb" style="left:5px;top:598px;width:98px;height:21px"><span style="color:#f4f4f4;left:2.5px;top:2px;font-size:14px">10 uS</span><div class="dd"><i></i></div></div>
<div class="box" style="left:105px;top:597px;width:99px;height:22px"><span style="left:3px;top:3px;font-size:14px">50MS/s</span></div>
<div class="cb" style="left:205px;top:598px;width:98px;height:21px"><span style="color:#e8e8e8;left:3px;top:3px;font-size:14px">Min</span><div class="dd"><i></i></div></div>
<div class="btn" style="left:305px;top:598px;width:60px;height:20px"></div>
<svg class="a" style="left:0;top:0" width="852" height="645" viewBox="0 0 852 645"><path d="M340.5,600.8 L340.5,614 L333.2,607.4 Z" fill="#00008c"/><path d="M337.2,601 L329.8,607.4 L337.2,613.8" fill="none" stroke="#00008c" stroke-width="1.7"/></svg>
<div class="box" style="left:366px;top:597px;width:120px;height:22px"><span style="left:46px;top:3px;font-size:14px">37%</span></div>
<div class="btn" style="left:487px;top:598px;width:59px;height:20px"></div>
<svg class="a" style="left:0;top:0" width="852" height="645" viewBox="0 0 852 645"><path d="M511.8,600.8 L511.8,614 L519,607.4 Z" fill="#00008c"/><path d="M515,601 L522.4,607.4 L515,613.8" fill="none" stroke="#00008c" stroke-width="1.7"/></svg>
<div class="a" style="left:556px;top:602px;width:132px;height:3px;background:#000"></div><div class="a" style="left:556px;top:601px;width:1px;height:5px;background:#000"></div><div class="a" style="left:687px;top:601px;width:1px;height:6px;background:#000"></div>
<div class="a" style="left:553px;top:612px;width:132px;height:2px;background:#808080"></div><div class="a" style="left:553px;top:614px;width:132px;height:1px;background:#fff"></div>
<div class="a" style="left:690px;top:608px;width:1px;height:9px;background:#606060"></div>
<div class="box" style="left:697px;top:597px;width:115px;height:22px"><span style="left:3px;top:3px;font-size:14px">Hold</span></div>
<div class="a" style="left:826px;top:597px;width:22px;height:22px;background:#f4f4f4;border-right:1px solid #707070;border-bottom:1px solid #707070"></div>
<div class="a" style="left:828px;top:599px;width:18px;height:18px;background:linear-gradient(#2f4fb4,#6d8fd8 60%,#9ab4e4)"></div>
<svg class="a" style="left:828px;top:599px" width="18" height="18" viewBox="0 0 18 18"><rect x="2.5" y="2.5" width="7" height="7" fill="#2a3aa8" stroke="#f4f6ff" stroke-width="1.6"/><circle cx="12.3" cy="11.3" r="4.3" fill="#5a74c8" stroke="#f4f6ff" stroke-width="1.5"/><path d="M5,5 L12,11 M12,11 L12,7.5 M12,11 L8.5,11" stroke="#f4f6ff" stroke-width="1.4" fill="none"/></svg>
<!-- status bar -->
<div id="status"></div>
<div class="pn" style="left:4px;width:51px;border-left:none;border-bottom:none;border-top:1px solid #fff;border-right:1px solid #a0a0a0"></div>
<div class="pn" style="left:57px;width:48px"></div>
<div class="pn" style="left:115px;width:7px;border-right:none;border-bottom:none"></div>
<div class="pn" style="left:125px;width:7px;border-right:none;border-bottom:none"></div>
<div class="pn" style="left:135px;width:7px;border-right:none;border-bottom:none"></div>
<div class="pn" style="left:145px;width:7px;border-right:none;border-bottom:none"></div>
<div class="pn" style="left:711px;width:67px;top:622px;background:#f6f6f6;border-top:1px solid #fff;border-left:1px solid #fff;border-right:1px solid #a0a0a0;border-bottom:1px solid #a0a0a0"><span style="left:0.5px;top:1px;font-size:12.6px">22/11/2013</span></div>
<div class="pn" style="left:779px;width:50px;top:622px;background:#f6f6f6;border-top:1px solid #fff;border-left:1px solid #fff;border-right:1px solid #a0a0a0;border-bottom:1px solid #a0a0a0"><span style="left:9.5px;top:1px;font-size:12.6px">15:14</span></div>
<svg class="a" style="left:830px;top:626px" width="17" height="15"><path d="M4,14 L16,2 M8,14 L16,6 M12,14 L16,10" stroke="#b8b8b8" stroke-width="1.2"/></svg>
</body></html>
